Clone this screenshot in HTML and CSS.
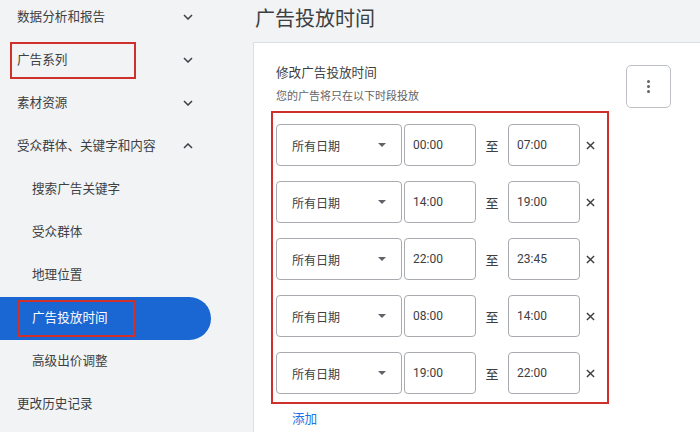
FILE: index.html
```html
<!DOCTYPE html>
<html lang="zh-CN">
<head>
<meta charset="utf-8">
<title>广告投放时间</title>
<link rel="stylesheet" href="styles.css">
</head>
<body>
<div class="page">
  <nav class="sidebar">
    <ul class="nav">
      <li class="item"><span class="label">数据分析和报告</span><svg class="chev" viewBox="0 0 10 6"><path d="M1 1l4 4 4-4"/></svg></li>
      <li class="item"><span class="label mark mark-top">广告系列</span><svg class="chev" viewBox="0 0 10 6"><path d="M1 1l4 4 4-4"/></svg></li>
      <li class="item"><span class="label">素材资源</span><svg class="chev" viewBox="0 0 10 6"><path d="M1 1l4 4 4-4"/></svg></li>
      <li class="item"><span class="label">受众群体、关键字和内容</span><svg class="chev" viewBox="0 0 10 6"><path d="M1 5l4-4 4 4"/></svg></li>
      <li class="item sub"><span class="label">搜索广告关键字</span></li>
      <li class="item sub"><span class="label">受众群体</span></li>
      <li class="item sub"><span class="label">地理位置</span></li>
      <li class="item sub active"><span class="label mark mark-active">广告投放时间</span></li>
      <li class="item sub"><span class="label">高级出价调整</span></li>
      <li class="item"><span class="label">更改历史记录</span></li>
    </ul>
  </nav>
  <main class="main">
    <h1 class="title">广告投放时间</h1>
    <section class="card">
      <div class="card-inner">
        <div class="card-head">
          <div class="head-text">
            <div class="head-title">修改广告投放时间</div>
            <div class="head-sub">您的广告将只在以下时段投放</div>
          </div>
          <button class="kebab" type="button" aria-label="更多">
            <span class="dot"></span><span class="dot"></span><span class="dot"></span>
          </button>
        </div>
        <div class="rows">
          <div class="row">
            <div class="select"><span>所有日期</span><span class="caret"></span></div>
            <div class="time">00:00</div>
            <div class="to">至</div>
            <div class="time">07:00</div>
            <svg class="close" viewBox="0 0 10 10"><path d="M1 1l8 8M9 1l-8 8"/></svg>
          </div>
          <div class="row">
            <div class="select"><span>所有日期</span><span class="caret"></span></div>
            <div class="time">14:00</div>
            <div class="to">至</div>
            <div class="time">19:00</div>
            <svg class="close" viewBox="0 0 10 10"><path d="M1 1l8 8M9 1l-8 8"/></svg>
          </div>
          <div class="row">
            <div class="select"><span>所有日期</span><span class="caret"></span></div>
            <div class="time">22:00</div>
            <div class="to">至</div>
            <div class="time">23:45</div>
            <svg class="close" viewBox="0 0 10 10"><path d="M1 1l8 8M9 1l-8 8"/></svg>
          </div>
          <div class="row">
            <div class="select"><span>所有日期</span><span class="caret"></span></div>
            <div class="time">08:00</div>
            <div class="to">至</div>
            <div class="time">14:00</div>
            <svg class="close" viewBox="0 0 10 10"><path d="M1 1l8 8M9 1l-8 8"/></svg>
          </div>
          <div class="row">
            <div class="select"><span>所有日期</span><span class="caret"></span></div>
            <div class="time">19:00</div>
            <div class="to">至</div>
            <div class="time">22:00</div>
            <svg class="close" viewBox="0 0 10 10"><path d="M1 1l8 8M9 1l-8 8"/></svg>
          </div>
        </div>
        <a class="add" href="#">添加</a>
      </div>
    </section>
  </main>
</div>
</body>
</html>
```

FILE: styles.css
```css
* { box-sizing: border-box; }
html, body {
  margin: 0;
  padding: 0;
  width: 700px;
  height: 432px;
  overflow: hidden;
  background: #f1f3f4;
  font-family: Roboto, "Noto Sans CJK SC", sans-serif;
  color: #3c4043;
}
.page {
  display: grid;
  grid-template-columns: 253px 1fr;
  height: 432px;
}
.sidebar { overflow: hidden; }
.nav {
  list-style: none;
  margin: -4.5px 0 0 0;
  padding: 0;
  width: 211px;
}
.item {
  height: 43px;
  display: flex;
  align-items: center;
  justify-content: space-between;
  padding: 0 17px;
  font-size: 12.6px;
  line-height: 18px;
  color: #3c4043;
}
.item.sub { padding-left: 32px; }
.item.active {
  background: #1a66d2;
  color: #fff;
  border-radius: 0 22px 22px 0;
}
.chev {
  width: 10px;
  height: 6px;
  fill: none;
  stroke: #3c4043;
  stroke-width: 1.5;
  margin-right: 1px;
}
.mark {
  display: inline-flex;
  align-items: center;
  height: 37px;
  border: 2px solid #d0302b;
}
.mark-top {
  width: 126px;
  margin-left: -7px;
  padding-left: 5px;
}
.mark-active {
  width: 117px;
  margin-left: -14px;
  padding-left: 12px;
}
.main {
  overflow: hidden;
  padding-top: 5px;
}
.title {
  margin: 0 0 9px 2px;
  font-size: 20px;
  line-height: 28px;
  font-weight: 400;
  color: #3c4043;
}
.card {
  background: #fff;
  border-top: 1px solid #dcdee1;
  border-left: 1px solid #dcdee1;
  height: 420px;
  width: 480px;
  padding: 21px 0 0 22px;
}
.card-inner { width: 395px; }
.card-head {
  display: flex;
  justify-content: space-between;
  align-items: flex-start;
}
.head-title {
  font-size: 12.6px;
  line-height: 18px;
  color: #3c4043;
}
.head-sub {
  margin-top: 7px;
  font-size: 11px;
  line-height: 16px;
  color: #5f6368;
}
.kebab {
  margin-top: 1px;
  width: 45px;
  height: 43px;
  border: 1px solid #bdc1c6;
  border-radius: 5px;
  background: #fff;
  padding: 0;
  display: flex;
  flex-direction: column;
  align-items: center;
  justify-content: center;
  gap: 1.5px;
}
.dot {
  width: 3.5px;
  height: 3.5px;
  border-radius: 50%;
  background: #5f6368;
}
.rows {
  margin: 3px 0 0 -5px;
  width: 338px;
  border: 2px solid #d0302b;
  padding: 11px 3px 8px 3px;
  display: flex;
  flex-direction: column;
  gap: 15px;
}
.row {
  display: flex;
  align-items: center;
  height: 42px;
}
.select {
  width: 126px;
  height: 42px;
  border: 1px solid #a8abaf;
  border-radius: 4px;
  display: flex;
  align-items: center;
  justify-content: space-between;
  padding: 0 15px 0 15px;
  font-size: 12px;
  color: #3c4043;
  margin-right: 2px;
}
.caret {
  width: 0;
  height: 0;
  border-left: 4px solid transparent;
  border-right: 4px solid transparent;
  border-top: 4px solid #5f6368;
}
.time {
  width: 72px;
  height: 42px;
  border: 1px solid #a8abaf;
  border-radius: 4px;
  display: flex;
  align-items: center;
  padding-left: 8px;
  font-size: 12px;
  color: #3c4043;
}
.to {
  width: 32px;
  text-align: center;
  font-size: 13px;
  color: #3c4043;
}
.close {
  width: 9px;
  height: 9px;
  margin-left: 6px;
  fill: none;
  stroke: #3c4043;
  stroke-width: 1.6;
}
.add {
  display: block;
  margin: 6px 0 0 16px;
  font-size: 12.6px;
  line-height: 18px;
  color: #1a73e8;
  text-decoration: none;
}
```
